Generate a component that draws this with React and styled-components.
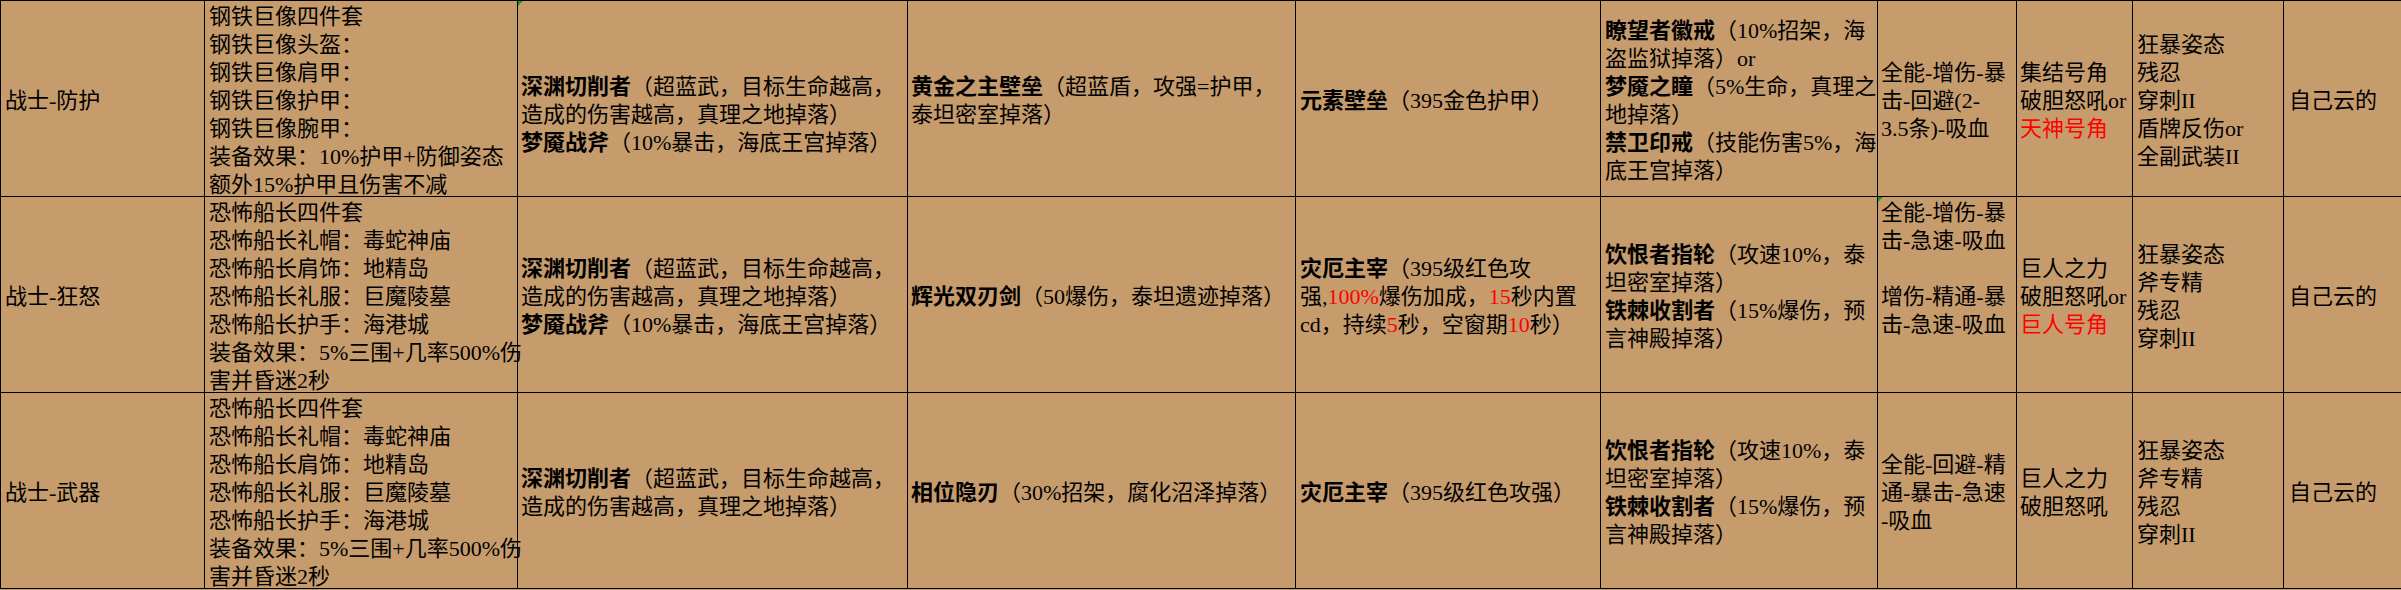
import React from "react";
import styled, { createGlobalStyle } from "styled-components";

const TAN = "#c69c6d";

const GlobalStyle = createGlobalStyle`
  html, body {
    margin: 0;
    padding: 0;
    background: ${TAN};
  }
  body {
    font-family: "Liberation Serif", "Noto Sans CJK SC", serif;
    font-size: 22px;
    color: #000;
    overflow: hidden;
  }
`;

const Sheet = styled.div`
  display: grid;
  grid-template-columns: 204px 313px 390px 388px 305px 277px 139px 116px 151px 118px;
  grid-auto-rows: 196px;
  width: max-content;
  border-top: 1px solid #000;
  border-left: 1px solid #000;
  background: ${TAN};
`;

const Cell = styled.div`
  position: relative;
  box-sizing: border-box;
  display: flex;
  flex-direction: column;
  justify-content: center;
  padding: 4px 3px 0 ${(p) => p.$indent}px;
  border-bottom: 1px solid #000;
  border-right: ${(p) => (p.$last ? "none" : "1px solid #000")};
  white-space: nowrap;
  min-width: 0;
`;

const Line = styled.div`
  flex-shrink: 0;
  height: 28px;
  line-height: 28px;
`;

const Strong = styled.span`
  font-weight: 700;
`;

const Red = styled.span`
  color: #ff0000;
`;

const Flag = styled.span`
  position: absolute;
  left: 0;
  top: 0;
  width: 0;
  height: 0;
  border-top: 5px solid #1f9a1f;
  border-right: 5px solid transparent;
`;

const B = (t) => ({ t, b: true });
const R = (t) => ({ t, r: true });

const set2 = [
  "恐怖船长四件套",
  "恐怖船长礼帽：毒蛇神庙",
  "恐怖船长肩饰：地精岛",
  "恐怖船长礼服：巨魔陵墓",
  "恐怖船长护手：海港城",
  "装备效果：5%三围+几率500%伤",
  "害并昏迷2秒",
];

const rings = [
  [B("饮恨者指轮"), "（攻速10%，泰"],
  "坦密室掉落）",
  [B("铁棘收割者"), "（15%爆伤，预"],
  "言神殿掉落）",
];

const rows = [
  [
    { lines: ["战士-防护"] },
    {
      lines: [
        "钢铁巨像四件套",
        "钢铁巨像头盔：",
        "钢铁巨像肩甲：",
        "钢铁巨像护甲：",
        "钢铁巨像腕甲：",
        "装备效果：10%护甲+防御姿态",
        "额外15%护甲且伤害不减",
      ],
    },
    {
      flag: true,
      lines: [
        "",
        [B("深渊切削者"), "（超蓝武，目标生命越高，"],
        "造成的伤害越高，真理之地掉落）",
        [B("梦魇战斧"), "（10%暴击，海底王宫掉落）"],
      ],
    },
    {
      lines: [[B("黄金之主壁垒"), "（超蓝盾，攻强=护甲，"], "泰坦密室掉落）"],
    },
    { lines: [[B("元素壁垒"), "（395金色护甲）"]] },
    {
      lines: [
        [B("瞭望者徽戒"), "（10%招架，海"],
        "盗监狱掉落）or",
        [B("梦魇之瞳"), "（5%生命，真理之"],
        "地掉落）",
        [B("禁卫印戒"), "（技能伤害5%，海"],
        "底王宫掉落）",
      ],
    },
    { lines: ["全能-增伤-暴", "击-回避(2-", "3.5条)-吸血"] },
    { lines: ["集结号角", "破胆怒吼or", [R("天神号角")]] },
    { lines: ["狂暴姿态", "残忍", "穿刺II", "盾牌反伤or", "全副武装II"] },
    { lines: ["自己云的"] },
  ],
  [
    { lines: ["战士-狂怒"] },
    { lines: set2 },
    {
      lines: [
        [B("深渊切削者"), "（超蓝武，目标生命越高，"],
        "造成的伤害越高，真理之地掉落）",
        [B("梦魇战斧"), "（10%暴击，海底王宫掉落）"],
      ],
    },
    { lines: [[B("辉光双刃剑"), "（50爆伤，泰坦遗迹掉落）"]] },
    {
      lines: [
        [B("灾厄主宰"), "（395级红色攻"],
        ["强,", R("100%"), "爆伤加成，", R("15"), "秒内置"],
        ["cd，持续", R("5"), "秒，空窗期", R("10"), "秒）"],
      ],
    },
    { lines: rings },
    {
      flag: true,
      lines: ["全能-增伤-暴", "击-急速-吸血", "", "增伤-精通-暴", "击-急速-吸血", "", ""],
    },
    { lines: ["巨人之力", "破胆怒吼or", [R("巨人号角")]] },
    { lines: ["狂暴姿态", "斧专精", "残忍", "穿刺II"] },
    { lines: ["自己云的"] },
  ],
  [
    { lines: ["战士-武器"] },
    { lines: set2 },
    {
      lines: [
        [B("深渊切削者"), "（超蓝武，目标生命越高，"],
        "造成的伤害越高，真理之地掉落）",
      ],
    },
    { lines: [[B("相位隐刃"), "（30%招架，腐化沼泽掉落）"]] },
    { lines: [[B("灾厄主宰"), "（395级红色攻强）"]] },
    { lines: rings },
    { lines: ["全能-回避-精", "通-暴击-急速", "-吸血"] },
    { lines: ["巨人之力", "破胆怒吼"] },
    { lines: ["狂暴姿态", "斧专精", "残忍", "穿刺II"] },
    { lines: ["自己云的"] },
  ],
];

const indents = [4, 4, 3, 3, 4, 4, 3, 3, 4, 5];

function Segment({ seg }) {
  if (typeof seg === "string") return seg;
  if (seg.b) return <Strong>{seg.t}</Strong>;
  if (seg.r) return <Red>{seg.t}</Red>;
  return seg.t;
}

function TextLine({ line }) {
  const segs = Array.isArray(line) ? line : [line];
  return (
    <Line>
      {line === "" ? "\u00a0" : segs.map((s, i) => <Segment key={i} seg={s} />)}
    </Line>
  );
}

export default function App() {
  return (
    <>
      <GlobalStyle />
      <Sheet>
        {rows.map((row, ri) =>
          row.map((cell, ci) => (
            <Cell key={`${ri}-${ci}`} $indent={indents[ci]} $last={ci === row.length - 1}>
              {cell.flag && <Flag />}
              {cell.lines.map((l, li) => (
                <TextLine key={li} line={l} />
              ))}
            </Cell>
          ))
        )}
      </Sheet>
    </>
  );
}
